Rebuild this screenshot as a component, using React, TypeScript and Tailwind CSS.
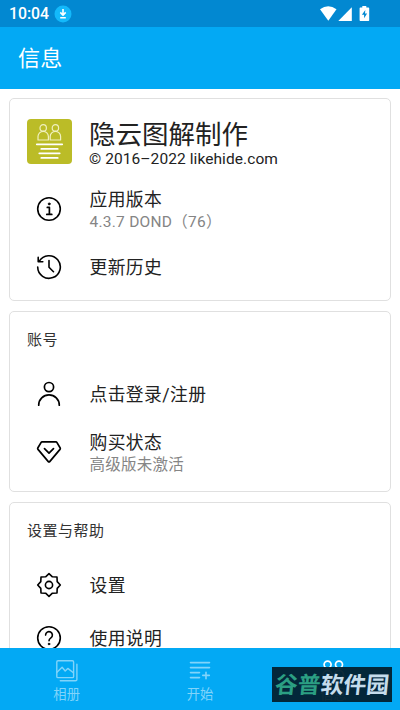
import type { ReactNode } from 'react'

interface RowProps { icon: ReactNode; title: string; sub?: string; className: string }
interface TabProps { icon: ReactNode; label: string; active?: boolean }

const stroke = { fill: 'none', stroke: 'currentColor', strokeLinecap: 'round', strokeLinejoin: 'round' } as const

function InfoIcon() {
  return (
    <svg viewBox="0 0 26 26" className="size-[26px]" {...stroke} strokeWidth={1.6}>
      <circle cx="13" cy="13" r="11.3" />
      <circle cx="13.2" cy="7.9" r="1" fill="currentColor" strokeWidth={0.8} />
      <path d="M11.3 11.4h2.1v6.9M10.8 18.4h5" strokeWidth={1.7} />
    </svg>
  )
}

function HistoryIcon() {
  return (
    <svg viewBox="0 0 26 26" className="size-[26px]" {...stroke} strokeWidth={1.6}>
      <path d="M3.3 7.2a11.3 11.3 0 1 1-1.6 5.9" />
      <path d="M2.2 3.4v4.4h4.6" />
      <path d="M13 6.6v6.6l4.5 4.5" />
    </svg>
  )
}

function UserIcon() {
  return (
    <svg viewBox="0 0 26 26" className="size-[26px]" {...stroke} strokeWidth={1.7}>
      <circle cx="13" cy="6.1" r="4.6" />
      <path d="M2.7 24.2a10.3 10.3 0 0 1 20.6 0" />
    </svg>
  )
}

function DiamondIcon() {
  return (
    <svg viewBox="0 0 26 26" className="size-[26px]" {...stroke} strokeWidth={1.7}>
      <path d="M6.1 2.9h13.8q.7 0 1.1.7l3.2 5.4q.4.7-.2 1.4L13.7 22.6q-.7.8-1.4 0L2 10.4q-.6-.7-.2-1.4L5 3.6q.4-.7 1.1-.7z" />
      <path d="M8.5 9.7 13 14.1l4.5-4.4" />
    </svg>
  )
}

function GearIcon() {
  return (
    <svg viewBox="0 0 26 26" className="size-[26px]" {...stroke} strokeWidth={1.6}>
      <path d="M13 1.7 16.4 4.8 21 5 21.2 9.6 24.3 13 21.2 16.4 21 21 16.4 21.2 13 24.3 9.6 21.2 5 21 4.8 16.4 1.7 13 4.8 9.6 5 5 9.6 4.8z" />
      <circle cx="13" cy="13" r="3.6" />
    </svg>
  )
}

function HelpIcon() {
  return (
    <svg viewBox="0 0 26 26" className="size-[26px]" {...stroke} strokeWidth={1.6}>
      <circle cx="13" cy="13" r="11.3" />
      <path d="M9.6 10.1a3.4 3.4 0 1 1 5.3 2.8c-1.3.9-1.9 1.4-1.9 2.9" />
      <circle cx="13" cy="19" r=".9" fill="currentColor" strokeWidth={0.6} />
    </svg>
  )
}

function AppLogo() {
  return (
    <svg viewBox="0 0 45 45" className="size-[45px] shrink-0" {...stroke}>
      <rect width="45" height="45" rx="4" fill="#bbbc27" stroke="none" />
      <g stroke="#f0f0bf" strokeWidth={1.2}>
        <circle cx="16.2" cy="8.9" r="3.2" />
        <path d="M11 21v-3.4a5.2 5.2 0 0 1 10.4 0V21z" />
        <circle cx="28.4" cy="8.9" r="3.2" />
        <path d="M23.2 21v-3.4a5.2 5.2 0 0 1 10.4 0V21z" />
      </g>
      <path d="M9.8 25.3h25.4M14.3 29.9h16.4M12.3 34.3h20.4M14.3 38.9h16.4" stroke="#fff" strokeWidth={1.8} />
    </svg>
  )
}

function AlbumIcon() {
  return (
    <svg viewBox="0 0 24 24" className="size-6" {...stroke} strokeWidth={1.4}>
      <rect x="1.8" y="1.8" width="16.8" height="16.8" rx="1.2" />
      <path d="M2 13.2 7.1 8.3 10.2 12l2.6-2.6 5.6 4.4" />
      <path d="M21.9 5.2v15.2q0 1.4-1.4 1.4H5.3" />
    </svg>
  )
}

function StartIcon() {
  return (
    <svg viewBox="0 0 24 24" className="size-6" {...stroke} strokeWidth={1.6}>
      <path d="M2.5 3.6h19M2.5 8.6h19M2.5 13.6h9M2.5 18.6h9M18 13.2v6.5M14.8 16.4h6.5" />
    </svg>
  )
}

function PeopleIcon() {
  return (
    <svg viewBox="0 0 24 24" className="size-6" {...stroke} strokeWidth={1.7}>
      <circle cx="6.6" cy="5.6" r="3.5" />
      <circle cx="18" cy="5.6" r="3.5" />
      <path d="M2 20v-4a4.6 4.6 0 0 1 9.2 0v4zM13.4 20v-4a4.6 4.6 0 0 1 9.2 0v4z" />
    </svg>
  )
}

function StatusBar() {
  return (
    <div className="flex h-[27px] shrink-0 items-center bg-[#0288d1] pl-[9px] pr-[30px] text-white">
      <span className="text-[15.8px] font-medium leading-none">10:04</span>
      <svg viewBox="0 0 18 18" className="ml-[5px] size-[18px]">
        <circle cx="9" cy="9" r="8.5" fill="#13b9fb" />
        <path d="M9 4v6M6.3 7.4 9 10.2l2.7-2.8M6.2 12.7h5.6" {...stroke} strokeWidth={1.6} strokeLinecap="butt" />
      </svg>
      <svg viewBox="0 0 50 16" className="ml-auto h-4 w-[50px]" fill="#fff">
        <path d="M0 3.3Q8.2-2.6 16.5 3.3L8.3 14.7z" />
        <path d="M31.8 1.3v13.6H18.3z" />
        <path d="M42.3 0h4v1.6h2.2q.7 0 .7.7v12q0 .7-.7.7h-8.2q-.7 0-.7-.7v-12q0-.7.7-.7h2z" />
        <path d="m45.3 4-3.4 4.7h2.2v3.6l3-4.7h-2.1z" fill="#0288d1" />
      </svg>
    </div>
  )
}

function Row({ icon, title, sub, className }: RowProps) {
  return (
    <div className={`flex items-center ${className}`}>
      <span className="mr-[27.5px] text-black">{icon}</span>
      <div className="pt-[2px]">
        <div className="text-[17.8px] leading-[24px] tracking-[.4px] text-[#222]">{title}</div>
        {sub && <div className="text-[15.5px] leading-[21px] tracking-[.25px] text-[#858585]">{sub}</div>}
      </div>
    </div>
  )
}

function Card({ title, className, children }: { title?: string; className: string; children: ReactNode }) {
  return (
    <section className={`shrink-0 rounded-[5px] border border-[#e0e0e0] bg-white pl-[17px] ${className}`}>
      {title && <h2 className="h-[20px] text-[15px] leading-[20px] tracking-[.5px] text-[#333]">{title}</h2>}
      {children}
    </section>
  )
}

function Tab({ icon, label, active }: TabProps) {
  return (
    <div className={`flex flex-1 flex-col items-center pt-[11px] ${active ? 'text-white' : 'text-[#81d4fa]'}`}>
      {icon}
      <span className="mt-[2px] text-[13.3px] leading-[20px]">{label}</span>
    </div>
  )
}

export default function App() {
  return (
    <div className="relative flex h-[710px] w-[400px] flex-col overflow-hidden bg-white font-['Roboto','Noto_Sans_CJK_SC',sans-serif]">
      <StatusBar />
      <header className="flex h-[62px] shrink-0 items-center bg-[#03a9f4] pl-[18px] text-[22px] tracking-[.2px] text-white">信息</header>

      <main className="flex min-h-0 flex-1 flex-col gap-[10px] overflow-hidden bg-white px-[9px] pt-[9px]">
        <Card className="h-[203px]">
          <div className="flex h-[90px] items-start pt-[20px]">
            <AppLogo />
            <div className="ml-[17px]">
              <h1 className="text-[26.5px] leading-[31px] text-[#222]">隐云图解制作</h1>
              <p className="text-[15.5px] leading-[18px] tracking-[.08px] text-[#222]">© 2016–2022 likehide.com</p>
            </div>
          </div>
          <Row className="h-[40px] pl-[9px]" icon={<InfoIcon />} title="应用版本" sub="4.3.7 DOND（76）" />
          <Row className="mt-[14px] h-[48px] pl-[9px]" icon={<HistoryIcon />} title="更新历史" />
        </Card>

        <Card title="账号" className="h-[181px] pt-[18px]">
          <Row className="mt-[20px] h-[48px] pl-[9px]" icon={<UserIcon />} title="点击登录/注册" />
          <Row className="mt-[10px] h-[48px] pl-[9px]" icon={<DiamondIcon />} title="购买状态" sub="高级版未激活" />
        </Card>

        <Card title="设置与帮助" className="h-[220px] pt-[18px]">
          <Row className="mt-[20px] h-[48px] pl-[9px]" icon={<GearIcon />} title="设置" />
          <Row className="mt-[5px] h-[48px] pl-[9px]" icon={<HelpIcon />} title="使用说明" />
        </Card>
      </main>

      <nav className="flex h-[62px] shrink-0 bg-[#03a9f4]">
        <Tab icon={<AlbumIcon />} label="相册" />
        <Tab icon={<StartIcon />} label="开始" />
        <Tab icon={<PeopleIcon />} label="信息" active />
      </nav>

      <div className="absolute left-[272px] top-[667px] flex h-[35px] w-[120px] items-center justify-center bg-[#03202f]/95 pt-[3px]">
        <span className="-skew-x-6 whitespace-nowrap text-[22.8px] font-bold leading-none text-[#c5dcec]">
          <span className="text-[#2b9f83]">谷普</span>软件园
        </span>
      </div>
    </div>
  )
}
